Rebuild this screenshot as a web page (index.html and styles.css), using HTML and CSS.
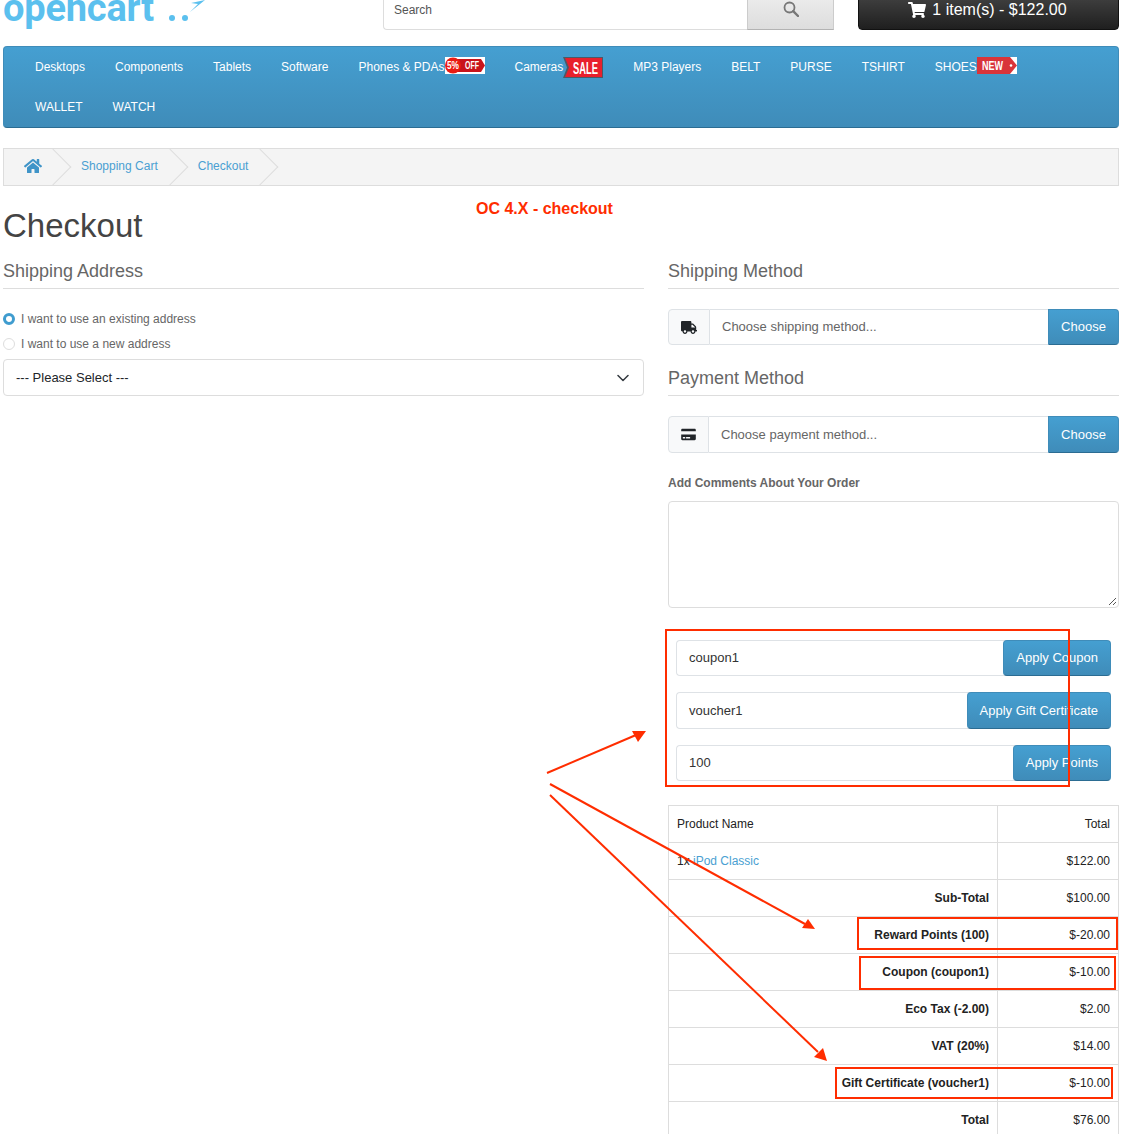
FILE: index.html
```html
<!DOCTYPE html>
<html lang="en">
<head>
<meta charset="utf-8">
<title>Checkout</title>
<link rel="stylesheet" href="styles.css">
</head>
<body>
<div class="page">
  <header class="top">
    <a class="logo">
      <span class="logo-word">opencart</span>
      <svg class="logo-mark" width="40" height="28" viewBox="0 0 40 28"><circle cx="5" cy="18" r="3" fill="#5bc0ee"/><circle cx="18" cy="18" r="3" fill="#5bc0ee"/><path d="M23 12 L38 0 L24 3 L31 4 Z" fill="#5bc0ee"/></svg>
    </a>
    <div class="search">
      <div class="search-input">Search</div>
      <div class="search-btn"><svg width="16" height="16" viewBox="0 0 16 16"><circle cx="6.5" cy="6.5" r="5" fill="none" stroke="#777" stroke-width="1.8"/><path d="M10.2 10.2 L15 15" stroke="#777" stroke-width="2.4" stroke-linecap="round"/></svg></div>
    </div>
    <div class="cart">
      <svg width="18" height="16" viewBox="0 0 576 512"><path fill="#fff" d="M528.12 301.319l47.273-208C578.806 78.301 567.391 64 551.99 64H159.208l-9.166-44.81C147.758 8.021 137.93 0 126.529 0H24C10.745 0 0 10.745 0 24v16c0 13.255 10.745 24 24 24h69.883l70.248 343.435C147.325 417.1 136 435.222 136 456c0 30.928 25.072 56 56 56s56-25.072 56-56c0-15.674-6.447-29.835-16.824-40h209.647C430.447 426.165 424 440.326 424 456c0 30.928 25.072 56 56 56s56-25.072 56-56c0-22.172-12.888-41.332-31.579-50.405l5.517-24.276c3.413-15.018-8.002-29.319-23.403-29.319H218.117l-6.545-32h293.145c11.206 0 20.92-7.754 23.403-18.681z"/></svg>
      <span>1 item(s) - $122.00</span>
    </div>
  </header>

  <nav class="menu">
    <a class="menu-item">Desktops</a>
    <a class="menu-item">Components</a>
    <a class="menu-item">Tablets</a>
    <a class="menu-item">Software</a>
    <a class="menu-item">Phones &amp; PDAs
      <svg class="badge" width="40" height="17" viewBox="0 0 40 17"><rect width="40" height="17" fill="#fff"/><path d="M8 2 H36 L40 8.500 L36 15 H8 Z" fill="#c8141b"/><circle cx="8" cy="8.500" r="8" fill="#ea1c13"/><text x="8" y="12" class="badge-t badge-small" text-anchor="middle" textLength="12" lengthAdjust="spacingAndGlyphs">5%</text><text x="27" y="12" class="badge-t badge-small" text-anchor="middle" textLength="14" lengthAdjust="spacingAndGlyphs">OFF</text></svg>
    </a>
    <a class="menu-item">Cameras
      <svg class="badge" width="40" height="21" viewBox="0 0 40 21"><path d="M0 0 H40 V21 H0 L4 10.500 Z" fill="#4a5a68"/><path d="M2 1 H39 V20 H2 L6 10.500 Z" fill="#e8202c"/><text x="22.500" y="16.500" class="badge-t badge-sale" text-anchor="middle" textLength="25" lengthAdjust="spacingAndGlyphs">SALE</text></svg>
    </a>
    <a class="menu-item">MP3 Players</a>
    <a class="menu-item">BELT</a>
    <a class="menu-item">PURSE</a>
    <a class="menu-item">TSHIRT</a>
    <a class="menu-item">SHOES
      <svg class="badge" width="40" height="17" viewBox="0 0 40 17"><rect width="40" height="17" fill="#fff"/><path d="M0 0 H33 L40 8.500 L33 17 H0 Z" fill="#d9343a"/><circle cx="34" cy="8.500" r="1.300" fill="#fff"/><text x="15.500" y="13" class="badge-t badge-new" text-anchor="middle" textLength="21" lengthAdjust="spacingAndGlyphs">NEW</text></svg>
    </a>
    <a class="menu-item">WALLET</a>
    <a class="menu-item">WATCH</a>
  </nav>

  <div class="crumbs">
    <a class="crumb crumb-home"><svg width="18" height="16" viewBox="0 0 576 512"><path fill="#3f94c8" d="M280.37 148.26L96 300.11V464a16 16 0 0 0 16 16l112.06-.29a16 16 0 0 0 15.92-16V368a16 16 0 0 1 16-16h64a16 16 0 0 1 16 16v95.64a16 16 0 0 0 16 16.05L464 480a16 16 0 0 0 16-16V300L295.67 148.26a12.19 12.19 0 0 0-15.3 0zM571.6 251.47L488 182.56V44.05a12 12 0 0 0-12-12h-56a12 12 0 0 0-12 12v72.61L318.47 43a48 48 0 0 0-61 0L4.34 251.47a12 12 0 0 0-1.6 16.9l25.5 31A12 12 0 0 0 45.15 301l235.22-193.74a12.19 12.19 0 0 1 15.3 0L530.9 301a12 12 0 0 0 16.9-1.6l25.5-31a12 12 0 0 0-1.7-16.93z"/></svg></a>
    <a class="crumb">Shopping Cart</a>
    <a class="crumb">Checkout</a>
  </div>

  <h1 class="title">Checkout</h1>

  <div class="columns">
    <section class="col-left">
      <h2 class="section-title">Shipping Address</h2>
      <div class="radios">
        <div class="radio-row"><span class="radio radio-on"></span>I want to use an existing address</div>
        <div class="radio-row"><span class="radio"></span>I want to use a new address</div>
      </div>
      <div class="select">
        <span>--- Please Select ---</span>
        <svg width="12" height="8" viewBox="0 0 12 8"><path d="M1 1.500 L6 6.500 L11 1.500" fill="none" stroke="#343a40" stroke-width="1.500" stroke-linecap="round" stroke-linejoin="round"/></svg>
      </div>
    </section>

    <section class="col-right">
      <h2 class="section-title">Shipping Method</h2>
      <div class="group group-method">
        <div class="addon addon-ship"><svg width="16" height="13" viewBox="0 0 640 512"><path fill="#212529" d="M624 352h-16V243.9c0-12.7-5.1-24.9-14.1-33.9L494 110.1c-9-9-21.2-14.1-33.9-14.1H416V48c0-26.5-21.5-48-48-48H48C21.5 0 0 21.5 0 48v320c0 26.5 21.5 48 48 48h16c0 53 43 96 96 96s96-43 96-96h128c0 53 43 96 96 96s96-43 96-96h48c8.8 0 16-7.2 16-16v-32c0-8.8-7.2-16-16-16zM160 464c-26.5 0-48-21.5-48-48s21.5-48 48-48 48 21.5 48 48-21.5 48-48 48zm320 0c-26.5 0-48-21.5-48-48s21.5-48 48-48 48 21.5 48 48-21.5 48-48 48zm80-208H416V144h44.1l99.9 99.9V256z"/></svg></div>
        <div class="field field-muted">Choose shipping method...</div>
        <a class="btn btn-choose">Choose</a>
      </div>
      <h2 class="section-title section-next">Payment Method</h2>
      <div class="group group-tall group-method">
        <div class="addon addon-pay"><svg width="15" height="13" viewBox="0 0 576 512"><path fill="#212529" d="M0 432c0 26.500 21.500 48 48 48h480c26.500 0 48-21.500 48-48V256H0v176zm192-68c0-6.600 5.400-12 12-12h136c6.600 0 12 5.400 12 12v40c0 6.600-5.400 12-12 12H204c-6.600 0-12-5.400-12-12v-40zm-128 0c0-6.600 5.400-12 12-12h72c6.600 0 12 5.400 12 12v40c0 6.600-5.400 12-12 12H76c-6.600 0-12-5.400-12-12v-40zM576 80v48H0V80c0-26.500 21.500-48 48-48h480c26.500 0 48 21.500 48 48z"/></svg></div>
        <div class="field field-muted">Choose payment method...</div>
        <a class="btn btn-choose">Choose</a>
      </div>
      <label class="comment-label">Add Comments About Your Order</label>
      <div class="comment">
        <svg class="grip" width="9" height="9" viewBox="0 0 9 9"><path d="M1 8 L8 1 M5 8 L8 5" stroke="#555" stroke-width="1" fill="none"/></svg>
      </div>
      <div class="codes">
        <div class="group"><div class="field">coupon1</div><a class="btn">Apply Coupon</a></div>
        <div class="group group-tall"><div class="field">voucher1</div><a class="btn">Apply Gift Certificate</a></div>
        <div class="group"><div class="field">100</div><a class="btn">Apply Points</a></div>
      </div>
      <table class="summary">
        <colgroup><col class="col-name"><col class="col-total"></colgroup>
        <tr><td>Product Name</td><td class="num">Total</td></tr>
        <tr><td>1x <a class="link">iPod Classic</a></td><td class="num">$122.00</td></tr>
        <tr><td class="num strong">Sub-Total</td><td class="num">$100.00</td></tr>
        <tr><td class="num strong">Reward Points (100)</td><td class="num">$-20.00</td></tr>
        <tr><td class="num strong">Coupon (coupon1)</td><td class="num">$-10.00</td></tr>
        <tr><td class="num strong">Eco Tax (-2.00)</td><td class="num">$2.00</td></tr>
        <tr><td class="num strong">VAT (20%)</td><td class="num">$14.00</td></tr>
        <tr><td class="num strong">Gift Certificate (voucher1)</td><td class="num">$-10.00</td></tr>
        <tr><td class="num strong">Total</td><td class="num">$76.00</td></tr>
      </table>
    </section>
  </div>

  <div class="note">OC 4.X - checkout</div>
  <svg class="marks" width="1121" height="1134" viewBox="0 0 1121 1134">
    <g fill="none" stroke="#ff2d00" stroke-width="2">
      <rect x="666" y="630" width="403" height="156"/>
      <rect x="858" y="918" width="259" height="31"/>
      <rect x="860" y="957" width="255" height="32"/>
      <rect x="836" y="1068" width="276" height="30"/>
      <path d="M547 773 L636 735"/>
      <path d="M550 784 L805 924"/>
      <path d="M550 795 L818 1052"/>
    </g>
    <g fill="#ff2d00">
      <path d="M646 731 L632 731 L638 742 Z"/>
      <path d="M815 929 L802 928 L808 919 Z"/>
      <path d="M827 1061 L814 1057 L823 1048 Z"/>
    </g>
  </svg>
</div>
</body>
</html>
```
FILE: styles.css
```css
* { box-sizing: border-box; }
html, body { margin: 0; padding: 0; background: #fff; }
body { font-family: "Liberation Sans", Arial, sans-serif; font-size: 12px; color: #666; overflow: hidden; }
.page { position: relative; width: 1121px; height: 1134px; overflow: hidden; padding: 0 2px 0 3px; }

.top { display: flex; height: 46px; overflow: hidden; }
.logo { display: flex; width: 380px; height: 30px; overflow: hidden; }
.logo-word { flex: none; width: 152px; font-family: Roboto, sans-serif; font-weight: 700; font-size: 38px; line-height: 28px; letter-spacing: -0.2px; color: #5bc0ee; margin-top: -6px; height: 40px; white-space: nowrap; }
.logo-mark { margin-left: 12px; flex: none; }
.search { display: flex; width: 451px; height: 38px; margin-top: -8px; }
.search-input { flex: 1; border: 1px solid #ddd; border-right: 0; border-radius: 4px 0 0 4px; background: #fff; padding: 0 10px; line-height: 34px; color: #555; }
.search-btn { width: 87px; display: flex; align-items: center; justify-content: center; padding-bottom: 4px; background: linear-gradient(#eeeeee, #dddddd); border: 1px solid #ccc; border-bottom-color: #b3b3b3; }
.cart { display: flex; align-items: center; justify-content: center; gap: 6px; width: 261px; height: 38px; margin-top: -8px; margin-left: 24px; padding-right: 2px; background: linear-gradient(#444, #1f1f1f); border: 1px solid #111; border-radius: 4px; color: #fff; font-size: 16px; }
.cart span { position: relative; top: -1px; }
.cart svg { position: relative; top: -1px; }

.menu { display: flex; flex-wrap: wrap; height: 82px; padding: 0 16px; background: linear-gradient(#459fd1, #3f8cb9); border: 1px solid #3f8cb9; border-bottom-color: #2b6c92; border-radius: 4px; }
.menu-item { display: flex; align-items: flex-start; height: 40px; padding: 0 15px; line-height: 40px; color: #fff; font-size: 12px; white-space: nowrap; }
.badge { margin-top: 10px; flex: none; }
.badge-t { fill: #fff; font-family: "Liberation Sans", sans-serif; font-weight: 700; }
.badge-small { font-size: 10px; }
.badge-sale { font-size: 17px; }
.badge-new { font-size: 12px; }

.crumbs { display: flex; height: 38px; margin-top: 20px; background: #f4f4f4; border: 1px solid #ddd; overflow: hidden; }
.crumb { position: relative; display: flex; align-items: center; color: #4a9fd2; padding: 0 29px 2px 11px; font-size: 12px; }
.crumb::after { content: ""; position: absolute; right: 4px; top: 5px; width: 25px; height: 25px; transform: rotate(45deg); border-top: 1px solid #ddd; border-right: 1px solid #ddd; }
.crumb-home { padding: 0 0 2px 20px; width: 66px; }
.title { margin: 20px 0 0; height: 40px; font-size: 33px; line-height: 40px; font-weight: 400; color: #444; }

.columns { display: grid; grid-template-columns: 641px 451px; column-gap: 24px; }
.section-title { margin: 15px 0 0; height: 28px; padding-bottom: 7px; line-height: 20px; font-size: 18px; font-weight: 400; color: #666; border-bottom: 1px solid #ddd; }
.section-next { margin-top: 23px; }
.radios { margin-top: 17px; }
.radio-row { display: flex; align-items: center; height: 25px; gap: 6px; }
.radio { width: 12px; height: 12px; border: 1px solid #ddd; border-radius: 50%; background: #fff; }
.radio-on { border: 3.5px solid #3f9ccf; }
.select { display: flex; align-items: center; justify-content: space-between; height: 37px; margin-top: 3px; padding: 0 14px 0 12px; border: 1px solid #ddd; border-radius: 4px; color: #212529; font-size: 13px; }

.group { display: flex; height: 36px; }
.group-tall { height: 37px; }
.group-method { margin-top: 20px; }
.addon { display: flex; align-items: center; justify-content: center; background: #f8f9fa; border: 1px solid #dee2e6; border-radius: 4px 0 0 4px; flex: none; }
.addon-ship { width: 42px; }
.addon-pay { width: 41px; }
.field { flex: 1; display: flex; align-items: center; padding: 0 12px 1px; font-size: 13px; color: #333; background: #fff; border: 1px solid #dee2e6; border-right: 0; border-radius: 4px 0 0 4px; }
.group-tall .field { padding-bottom: 0; }
.field-muted { color: #666; border-left: 0; border-radius: 0; }
.btn { display: flex; align-items: center; flex: none; padding: 0 12px 1px; font-size: 13px; color: #fff; background: linear-gradient(#459fd1, #3f8cb9); border: 1px solid #3f8cb9; border-bottom-color: #2b6c92; border-radius: 4px; margin-left: -4px; }
.group-tall .btn { padding-bottom: 0; }
.btn-choose { width: 71px; padding: 0 0 1px; justify-content: center; margin-left: 0; border-radius: 0 4px 4px 0; }
.comment-label { display: block; margin-top: 20px; font-weight: 700; line-height: 20px; color: #666; }
.comment { position: relative; height: 107px; margin-top: 8px; border: 1px solid #ddd; border-radius: 4px; }
.grip { position: absolute; right: 1px; bottom: 1px; }
.codes { display: flex; flex-direction: column; gap: 16px; margin: 32px 8px 24px; }

.summary { width: 450px; table-layout: fixed; border-collapse: collapse; color: #222; font-size: 12px; }
.col-name { width: 329px; }
.col-total { width: 121px; }
.summary td { height: 37px; padding: 0 8px; border: 1px solid #ddd; line-height: 20px; }
.num { text-align: right; }
.strong { font-weight: 700; }
.link { color: #4a9fd2; }

.note { position: absolute; left: 476px; top: 200px; font-size: 16px; font-weight: 700; line-height: 18px; color: #ff2d00; }
.marks { position: absolute; left: 0; top: 0; pointer-events: none; }
```
